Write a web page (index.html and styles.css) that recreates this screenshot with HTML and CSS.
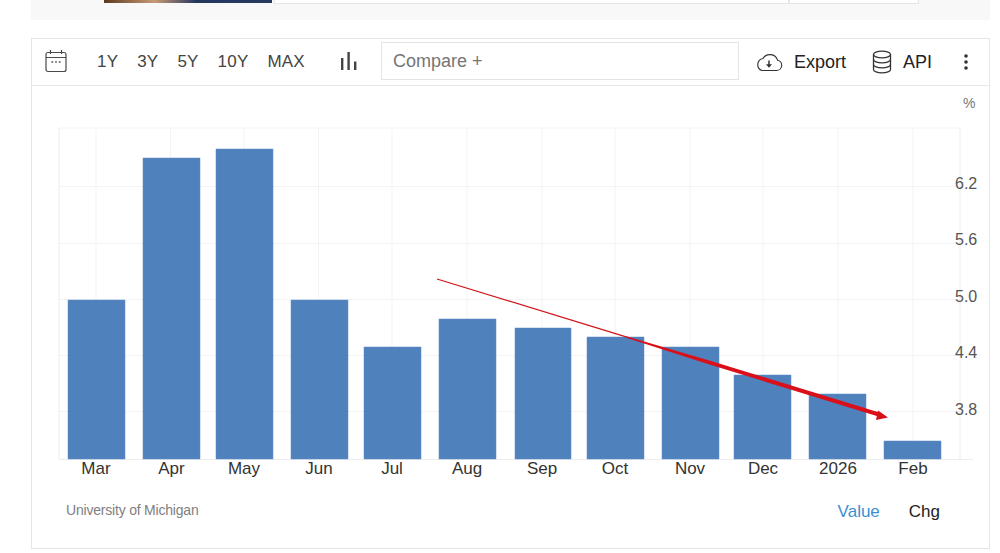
FILE: index.html
```html
<!DOCTYPE html>
<html lang="en">
<head>
<meta charset="utf-8">
<title>Consumer Inflation Expectations</title>
<link rel="stylesheet" href="styles.css">
</head>
<body>
<div class="strip">
  <div class="thumb"></div>
  <div class="strip-box"></div>
  <div class="strip-box strip-box-small"></div>
</div>
<section class="card">
  <div class="toolbar">
    <svg class="ico-cal" viewBox="0 0 22 24" width="22" height="24" fill="none" stroke="#4a4a4a" stroke-width="1.2"><rect x="1" y="3.5" width="20" height="19" rx="2"/><path d="M1 8.5h20M5.5 1v4M16.5 1v4"/><path d="M6.5 13h1.6M10.2 13h1.6M13.9 13h1.6" stroke-width="1.6"/></svg>
    <div class="ranges"><span>1Y</span><span>3Y</span><span>5Y</span><span>10Y</span><span>MAX</span></div>
    <svg class="ico-bars" viewBox="0 0 16 18" width="16" height="18" fill="#444"><rect x="0" y="6" width="2.4" height="12"/><rect x="6.4" y="0" width="2.4" height="18"/><rect x="13" y="9.5" width="2.4" height="8.5"/></svg>
    <div class="compare">Compare +</div>
    <div class="action act-export">
      <svg viewBox="0 0 28 20" width="28" height="20" fill="none" stroke="#333" stroke-width="1.1"><path d="M7 18.500h14.500a5.200 5.200 0 0 0 1-10.300A8 8 0 0 0 8 6.500 6.200 6.200 0 0 0 7 18.500Z"/><path d="M14 8.500v6" stroke-width="1.500"/><path d="M11 12.200h6l-3 3.500Z" fill="#333" stroke="none"/></svg>
      <span>Export</span>
    </div>
    <div class="action act-api">
      <svg viewBox="0 0 20 24" width="20" height="24" fill="none" stroke="#333" stroke-width="1.3"><ellipse cx="10" cy="4.500" rx="8.500" ry="3.300"/><path d="M1.500 4.500v15c0 1.800 3.800 3.300 8.500 3.300s8.500-1.500 8.500-3.300v-15"/><path d="M1.500 9.500c0 1.800 3.800 3.300 8.500 3.300s8.500-1.500 8.500-3.300M1.500 14.500c0 1.800 3.800 3.300 8.500 3.300s8.500-1.500 8.500-3.300"/></svg>
      <span>API</span>
    </div>
    <svg class="ico-more" viewBox="0 0 4 16" width="4" height="16" fill="#333"><circle cx="2" cy="2" r="1.800"/><circle cx="2" cy="8" r="1.800"/><circle cx="2" cy="14" r="1.800"/></svg>
  </div>
  <svg class="chart" viewBox="1 1 958 418" width="958" height="418" aria-label="Bar chart of monthly values">
    <g class="grid">
      <path d="M28 43H929M28 101.500H929M28 158.500H929M28 214.500H929M28 270.500H929M28 326.500H929"/>
      <path d="M65 43V374M139.500 43V374M213 43V374M287.500 43V374M361 43V374M436 43V374M511 43V374M584 43V374M659 43V374M732 43V374M807 43V374M882 43V374"/>
    </g>
    <path class="edge" d="M28 43V374.500H942M929 43V374"/>
    <g class="bars">
      <rect x="37" y="215" width="57" height="159"/>
      <rect x="112" y="73" width="57" height="301"/>
      <rect x="185" y="64" width="57" height="310"/>
      <rect x="260" y="215" width="57" height="159"/>
      <rect x="333" y="262" width="57" height="112"/>
      <rect x="408" y="234" width="57" height="140"/>
      <rect x="484" y="243" width="56" height="131"/>
      <rect x="556" y="252" width="57" height="122"/>
      <rect x="631" y="262" width="57" height="112"/>
      <rect x="703" y="290" width="57" height="84"/>
      <rect x="778" y="309" width="57" height="65"/>
      <rect x="853" y="356" width="57" height="18"/>
    </g>
    <g class="xlabels">
      <text x="65" y="389">Mar</text><text x="140.500" y="389">Apr</text><text x="213" y="389">May</text><text x="288" y="389">Jun</text><text x="361" y="389">Jul</text><text x="436" y="389">Aug</text><text x="511" y="389">Sep</text><text x="584" y="389">Oct</text><text x="659" y="389">Nov</text><text x="732" y="389">Dec</text><text x="807" y="389">2026</text><text x="882" y="389">Feb</text>
    </g>
    <g class="ylabels">
      <text x="924" y="104">6.2</text><text x="924" y="160">5.6</text><text x="924" y="217">5.0</text><text x="924" y="273">4.4</text><text x="924" y="330">3.8</text>
    </g>
    <text class="unit" x="932" y="23">%</text>
    <path class="arrow-thin" d="M406 194L600 253.400"/>
    <path class="arrow-line" d="M596 251.600L680 276.000L850 328.000L849 332.000L680 280.000L596 252.900Z"/>
    <path class="arrow-line" d="M857 332.500L847 325.500L845 335Z"/>
  </svg>
  <div class="foot">
    <span class="source-text">University of Michigan</span>
    <div class="modes"><span class="mode-on">Value</span><span>Chg</span></div>
  </div>
</section>
</body>
</html>
```

FILE: styles.css
```css
* { box-sizing: border-box; }
html, body { margin: 0; padding: 0; background: #fff; overflow: hidden; }
body {
  width: 1000px;
  height: 553px;
  padding-left: 31px;
  font-family: "Liberation Sans", Arial, sans-serif;
  color: #333;
}
.strip {
  width: 959px;
  height: 20px;
  background: #f8f8f8;
  display: flex;
  align-items: flex-start;
  padding-left: 73px;
}
.thumb {
  width: 168px;
  height: 3px;
  background: linear-gradient(90deg, #5b3a20 0, #c99a76 30%, #24375f 55%, #26395f 100%);
}
.strip-box {
  width: 515px;
  height: 4px;
  margin-left: 2px;
  background: #fff;
  border: 1px solid #e6e6e6;
  border-top: 0;
}
.strip-box-small { width: 130px; margin-left: 0; }
.card {
  width: 959px;
  height: 511px;
  margin-top: 18px;
  border: 1px solid #e6e6e6;
  background: #fff;
  display: flex;
  flex-direction: column;
}
.toolbar {
  height: 47px;
  flex: none;
  border-bottom: 1px solid #e8e8e8;
  display: flex;
  align-items: center;
}
.ico-cal { margin: 0 0 2px 13px; flex: none; }
.ranges {
  display: flex;
  gap: 19px;
  margin-left: 30px;
  font-size: 17px;
  letter-spacing: 0.2px;
  color: #444;
}
.ico-bars { margin-left: 36px; flex: none; margin-top: -2px; }
.compare {
  width: 358px;
  height: 38px;
  margin-left: 24px;
  margin-top: -3px;
  border: 1px solid #e3e3e3;
  padding-left: 11px;
  font-size: 18px;
  line-height: 37px;
  color: #757575;
  flex: none;
}
.action {
  display: flex;
  align-items: center;
  font-size: 18px;
  color: #222;
  flex: none;
}
.act-export { margin-left: 16px; gap: 11px; }
.act-api { margin-left: 26px; gap: 11px; }
.ico-more { margin-left: 32px; flex: none; }
.chart { display: block; flex: none; width: 958px; height: 418px; }
.grid path { fill: none; stroke: #f3f3f3; stroke-width: 1; }
.edge { fill: none; stroke: #ececec; stroke-width: 1; }
.bars rect { fill: #4f81bd; stroke: #5f8dc4; stroke-width: 0.5; }
.xlabels text { font-size: 17px; fill: #333; text-anchor: middle; }
.ylabels text { font-size: 16px; fill: #555; }
.unit { font-size: 14px; fill: #777; }
.arrow-thin { fill: none; stroke: #d0141c; stroke-width: 1.2; }
.arrow-line { fill: #d9101a; }
.foot {
  flex: 1;
  display: flex;
  justify-content: space-between;
  align-items: flex-start;
  padding: 0 49px 0 34px;
}
.source-text { font-size: 14px; color: #808080; margin-top: -2px; letter-spacing: -0.2px; }
.modes { display: flex; gap: 29px; font-size: 17px; color: #222; margin-top: -2px; }
.mode-on { color: #3a8fd0; }
```
